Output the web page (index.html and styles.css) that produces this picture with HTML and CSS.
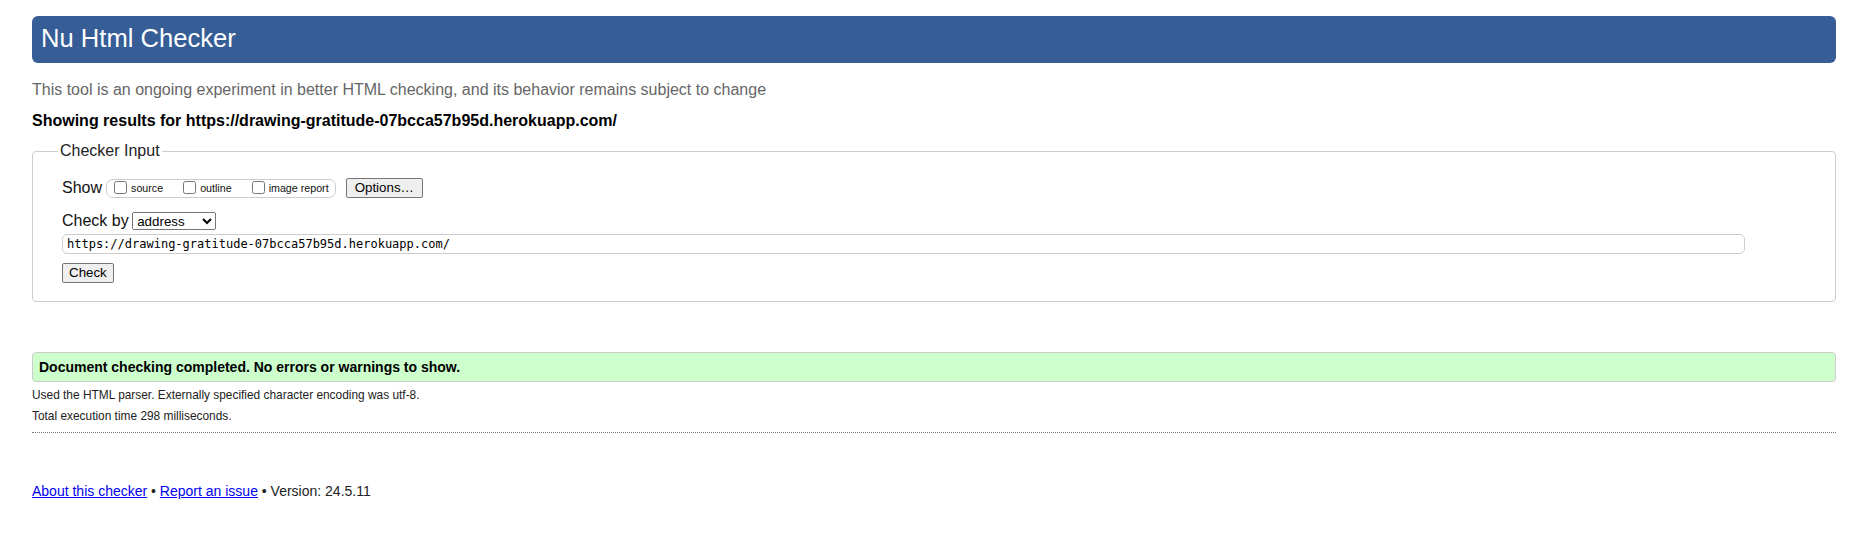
FILE: index.html
```html
<!DOCTYPE html>
<html lang="en">
<head>
<meta charset="utf-8">
<title>Nu Html Checker</title>
<link rel="stylesheet" href="styles.css">
</head>
<body>
<h1 class="title">Nu Html Checker</h1>
<p class="tagline">This tool is an ongoing experiment in better HTML checking, and its behavior remains subject to change</p>
<p class="showing">Showing results for https://drawing-gratitude-07bcca57b95d.herokuapp.com/</p>
<form class="checker" action="#">
  <fieldset class="input-set">
    <legend class="legend">Checker Input</legend>
    <div class="show-row">
      <span class="label">Show</span>
      <span class="options-group">
        <label class="opt"><input type="checkbox" class="cb">source</label>
        <label class="opt"><input type="checkbox" class="cb">outline</label>
        <label class="opt"><input type="checkbox" class="cb">image report</label>
      </span>
      <button type="button" class="btn btn-options">Options…</button>
    </div>
    <div class="checkby-row">
      <label class="label" for="docselect">Check by</label>
      <select id="docselect" class="select">
        <option>address</option>
        <option>file upload</option>
        <option>text input</option>
      </select>
    </div>
    <input class="url" type="url" value="https://drawing-gratitude-07bcca57b95d.herokuapp.com/">
    <div class="submit-row"><button class="btn btn-check" type="button">Check</button></div>
  </fieldset>
</form>
<div class="results">
  <p class="success">Document checking completed. No errors or warnings to show.</p>
</div>
<div class="details">
  <p class="detail">Used the HTML parser. Externally specified character encoding was utf-8.</p>
  <p class="detail">Total execution time 298 milliseconds.</p>
</div>
<p class="footer"><a class="link" href="#">About this checker</a> • <a class="link" href="#">Report an issue</a> • Version: 24.5.11</p>
</body>
</html>
```
FILE: styles.css
```css
html, body {
  margin: 0;
  padding: 0;
}
body {
  padding: 0 35px 0 32px;
  font-family: "Liberation Sans", Arial, sans-serif;
  font-size: 16px;
  color: #000;
  background: #fff;
}
.title {
  margin: 16px 0 0;
  background: #365d95;
  color: #fff;
  font-weight: normal;
  font-size: 25.6px;
  line-height: 29px;
  padding: 8px 9px 10px;
  border-radius: 6px;
}
.tagline {
  margin: 17px 0 0;
  line-height: 20px;
  color: #666;
}
.showing {
  margin: 11px 0 0;
  line-height: 20px;
  font-weight: bold;
}
.checker {
  margin: 0;
}
.input-set {
  margin: 10px 0 0;
  border: 1px solid #ccc;
  border-radius: 4px;
  padding: 17px 28px 18px 29px;
  min-width: 0;
}
.legend {
  margin-left: -4px;
  padding: 0 2px;
  line-height: 20px;
  color: #222;
}
.show-row {
  display: flex;
  align-items: center;
  height: 20px;
}
.label {
  line-height: 20px;
  color: #111;
}
.options-group {
  display: inline-flex;
  align-items: center;
  gap: 20px;
  height: 19px;
  box-sizing: border-box;
  border: 1px solid #ccc;
  border-radius: 7px;
  padding: 0 6px 0 7px;
  margin-left: 4px;
}
.opt {
  display: inline-flex;
  align-items: center;
  font-size: 10.7px;
  color: #111;
}
.cb {
  margin: -2px 4px 0 0;
  width: 13px;
  height: 13px;
}
.btn {
  font-family: "Liberation Sans", Arial, sans-serif;
  font-size: 13.33px;
  height: 20px;
  box-sizing: border-box;
  background: #efefef;
  color: #000;
  border: 1px solid #767676;
  border-radius: 2px;
  line-height: 16px;
}
.btn-options {
  margin-left: 10px;
  padding: 0 8px;
}
.checkby-row {
  display: flex;
  align-items: baseline;
  margin-top: 13px;
}
.select {
  margin-left: 3.5px;
  width: 84px;
  height: 18px;
  font-family: "Liberation Sans", Arial, sans-serif;
  font-size: 13.33px;
}
.url {
  display: block;
  margin-top: 3px;
  width: calc(100% - 62px);
  height: 20px;
  box-sizing: border-box;
  border: 1px solid #ccc;
  border-radius: 5px;
  padding: 0 4px;
  font-family: "DejaVu Sans Mono", "Liberation Mono", monospace;
  font-size: 12px;
  color: #000;
}
.submit-row {
  margin-top: 9px;
  display: flex;
}
.btn-check {
  padding: 0 6px;
}
.results {
  margin-top: 50px;
}
.success {
  margin: 0;
  background: #cfc;
  border: 1px solid #ccc;
  border-radius: 4px;
  padding: 5px 6px;
  line-height: 18px;
  font-size: 14px;
  font-weight: bold;
}
.details {
  margin-top: 3px;
  padding-bottom: 5px;
  border-bottom: 1px dotted #777;
}
.detail {
  margin: 0;
  font-size: 11.9px;
  line-height: 21px;
  color: #222;
}
.footer {
  margin: 48px 0 0;
  font-size: 14px;
  line-height: 20px;
  color: #222;
}
.link {
  color: #00e;
}
```
